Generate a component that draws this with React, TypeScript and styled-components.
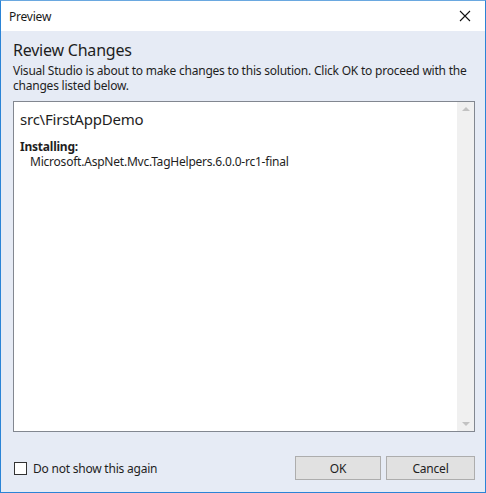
import React from 'react';
import styled, { createGlobalStyle } from 'styled-components';

const GlobalStyle = createGlobalStyle`
  html, body {
    margin: 0;
    padding: 0;
    background: #ffffff;
  }
  body {
    font-family: "Segoe UI", "Noto Sans", "Open Sans", sans-serif;
    font-size: 12px;
    letter-spacing: -0.22px;
    color: #1e1e1e;
  }
`;

const Window = styled.div`
  width: 486px;
  height: 493px;
  box-sizing: border-box;
  border: 1px solid #2b84d6;
  border-top-color: #6aa8e0;
  display: flex;
  flex-direction: column;
  background: #e6ebf5;
`;

const TitleBar = styled.div`
  height: 30px;
  flex: 0 0 auto;
  background: #ffffff;
  display: flex;
  align-items: center;
  justify-content: space-between;
  padding: 0 8px 0 8px;
`;

const TitleText = styled.span`
  font-size: 12px;
  color: #1a1a1a;
`;

const CloseButton = styled.button`
  width: 24px;
  height: 24px;
  border: none;
  background: transparent;
  padding: 0;
  display: flex;
  align-items: center;
  justify-content: center;
`;

const Body = styled.div`
  flex: 1 1 auto;
  display: flex;
  flex-direction: column;
  padding: 8px 10px 12px 12px;
`;

const Heading = styled.div`
  font-size: 16px;
  color: #1e1e1e;
  line-height: 22px;
  margin-bottom: 2px;
`;

const Description = styled.div`
  font-size: 12px;
  line-height: 15px;
  color: #1e1e1e;
  margin-bottom: 8px;
  padding-right: 8px;
`;

const ListBox = styled.div`
  flex: 1 1 auto;
  display: flex;
  border: 1px solid #828790;
  background: #ffffff;
  min-height: 0;
`;

const ListContent = styled.div`
  flex: 1 1 auto;
  padding: 7px 6px;
`;

const Project = styled.div`
  font-size: 15px;
  line-height: 20px;
  margin-bottom: 10px;
`;

const SectionTitle = styled.div`
  font-weight: bold;
  font-size: 12px;
  line-height: 15px;
`;

const Item = styled.div`
  font-size: 12px;
  line-height: 15px;
  padding-left: 10px;
`;

const ScrollBar = styled.div`
  width: 17px;
  flex: 0 0 auto;
  background: #f0f0f0;
  display: flex;
  flex-direction: column;
  justify-content: space-between;
  align-items: center;
  padding: 5px 0;
`;

const Arrow = styled.div<{ $down?: boolean }>`
  width: 0;
  height: 0;
  border-left: 4px solid transparent;
  border-right: 4px solid transparent;
  ${p => p.$down
    ? `border-top: 4px solid #c2c2c2;`
    : `border-bottom: 4px solid #c2c2c2;`}
`;

const Footer = styled.div`
  display: flex;
  align-items: center;
  justify-content: space-between;
  margin-top: 24px;
`;

const CheckRow = styled.label`
  display: flex;
  align-items: center;
  gap: 6px;
  font-size: 12px;
  padding-left: 1px;
`;

const CheckBox = styled.span`
  width: 13px;
  height: 13px;
  box-sizing: border-box;
  border: 1px solid #333333;
  background: #ffffff;
`;

const Buttons = styled.div`
  display: flex;
  gap: 5px;
`;

const Button = styled.button<{ $width?: number }>`
  width: ${p => p.$width ?? 86}px;
  height: 24px;
  box-sizing: border-box;
  border: 1px solid #adadad;
  background: #e1e1e1;
  font-family: inherit;
  font-size: 12px;
  letter-spacing: inherit;
  color: #1e1e1e;
  padding: 0;
`;

export default function App() {
  return (
    <>
      <GlobalStyle />
      <Window>
        <TitleBar>
          <TitleText>Preview</TitleText>
          <CloseButton aria-label="Close">
            <svg width="12" height="12" viewBox="0 0 12 12">
              <path d="M1 1 L11 11 M11 1 L1 11" stroke="#111" strokeWidth="1.1" fill="none" />
            </svg>
          </CloseButton>
        </TitleBar>
        <Body>
          <Heading>Review Changes</Heading>
          <Description>
            Visual Studio is about to make changes to this solution. Click OK to proceed with the changes listed below.
          </Description>
          <ListBox>
            <ListContent>
              <Project>src\FirstAppDemo</Project>
              <SectionTitle>Installing:</SectionTitle>
              <Item>Microsoft.AspNet.Mvc.TagHelpers.6.0.0-rc1-final</Item>
            </ListContent>
            <ScrollBar>
              <Arrow />
              <Arrow $down />
            </ScrollBar>
          </ListBox>
          <Footer>
            <CheckRow>
              <CheckBox />
              Do not show this again
            </CheckRow>
            <Buttons>
              <Button $width={86}>OK</Button>
              <Button $width={89}>Cancel</Button>
            </Buttons>
          </Footer>
        </Body>
      </Window>
    </>
  );
}
